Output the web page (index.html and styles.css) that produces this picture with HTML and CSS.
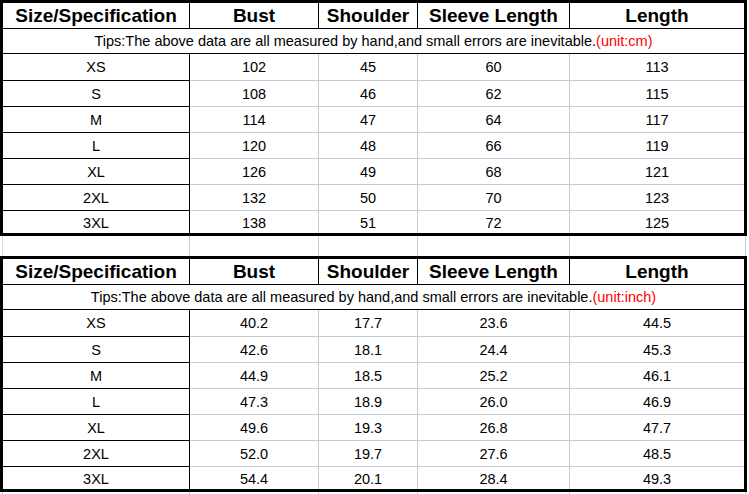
FILE: index.html
```html
<!DOCTYPE html>
<html lang="en">
<head>
<meta charset="utf-8">
<title>Size chart</title>
<link rel="stylesheet" href="styles.css">
</head>
<body>
<div class="sheet">
  <div class="chart">
    <div class="c head">Size/Specification</div>
    <div class="c head">Bust</div>
    <div class="c head">Shoulder</div>
    <div class="c head">Sleeve Length</div>
    <div class="c head last">Length</div>
    <div class="c tips">Tips:The above data are all measured by hand,and small errors are inevitable.<span class="unit">(unit:cm)</span></div>
    <div class="c size">XS</div><div class="c d">102</div><div class="c d">45</div><div class="c d">60</div><div class="c d last">113</div>
    <div class="c size">S</div><div class="c d">108</div><div class="c d">46</div><div class="c d">62</div><div class="c d last">115</div>
    <div class="c size">M</div><div class="c d">114</div><div class="c d">47</div><div class="c d">64</div><div class="c d last">117</div>
    <div class="c size">L</div><div class="c d">120</div><div class="c d">48</div><div class="c d">66</div><div class="c d last">119</div>
    <div class="c size">XL</div><div class="c d">126</div><div class="c d">49</div><div class="c d">68</div><div class="c d last">121</div>
    <div class="c size">2XL</div><div class="c d">132</div><div class="c d">50</div><div class="c d">70</div><div class="c d last">123</div>
    <div class="c size end">3XL</div><div class="c d end">138</div><div class="c d end">51</div><div class="c d end">72</div><div class="c d last end">125</div>
  </div>
  <div class="gap"><span></span><span></span><span></span><span></span><span></span><span></span></div>
  <div class="chart">
    <div class="c head">Size/Specification</div>
    <div class="c head">Bust</div>
    <div class="c head">Shoulder</div>
    <div class="c head">Sleeve Length</div>
    <div class="c head last">Length</div>
    <div class="c tips">Tips:The above data are all measured by hand,and small errors are inevitable.<span class="unit">(unit:inch)</span></div>
    <div class="c size">XS</div><div class="c d">40.2</div><div class="c d">17.7</div><div class="c d">23.6</div><div class="c d last">44.5</div>
    <div class="c size">S</div><div class="c d">42.6</div><div class="c d">18.1</div><div class="c d">24.4</div><div class="c d last">45.3</div>
    <div class="c size">M</div><div class="c d">44.9</div><div class="c d">18.5</div><div class="c d">25.2</div><div class="c d last">46.1</div>
    <div class="c size">L</div><div class="c d">47.3</div><div class="c d">18.9</div><div class="c d">26.0</div><div class="c d last">46.9</div>
    <div class="c size">XL</div><div class="c d">49.6</div><div class="c d">19.3</div><div class="c d">26.8</div><div class="c d last">47.7</div>
    <div class="c size">2XL</div><div class="c d">52.0</div><div class="c d">19.7</div><div class="c d">27.6</div><div class="c d last">48.5</div>
    <div class="c size end">3XL</div><div class="c d end">54.4</div><div class="c d end">20.1</div><div class="c d end">28.4</div><div class="c d last end">49.3</div>
  </div>
  <div class="gap tail"><span></span><span></span><span></span><span></span><span></span><span></span></div>
</div>
</body>
</html>
```

FILE: styles.css
```css
html, body {
  margin: 0;
  padding: 0;
  background: #ffffff;
}

.sheet {
  width: 749px;
  font-family: "Liberation Sans", Arial, sans-serif;
  color: #000;
}

.chart {
  display: grid;
  width: 741px;
  grid-template-columns: 187px 129px 99px 152px 174px;
  grid-template-rows: 26px 25px 27px 26px 26px 26px 26px 26px 22px;
  border: 3px solid #000;
}

.c {
  box-sizing: border-box;
  display: flex;
  align-items: center;
  justify-content: center;
  white-space: nowrap;
  font-size: 14.5px;
  line-height: 16px;
  border-right: 1px solid #c4cad8;
  border-bottom: 1px solid #c4cad8;
}

.head {
  font-size: 19px;
  line-height: 20px;
  font-weight: bold;
  border-right-color: #000;
  border-bottom-color: #000;
  padding-top: 1px;
}

.tips {
  grid-column: 1 / -1;
  border-right: none;
  border-bottom-color: #000;
}

.unit {
  color: #ff0000;
}

.size {
  border-right-color: #000;
  border-bottom-color: #000;
}

.last {
  border-right: none;
}

.end {
  border-bottom: none;
  padding-top: 2px;
}

.gap {
  display: grid;
  grid-template-columns: 3px 187px 129px 99px 152px 176px;
  height: 20px;
}

.gap span {
  box-sizing: border-box;
  border-right: 1px solid #c4cad8;
}

.gap span:first-child {
  border-right-color: #d6dae4;
}

.tail {
  height: 2px;
}
```
